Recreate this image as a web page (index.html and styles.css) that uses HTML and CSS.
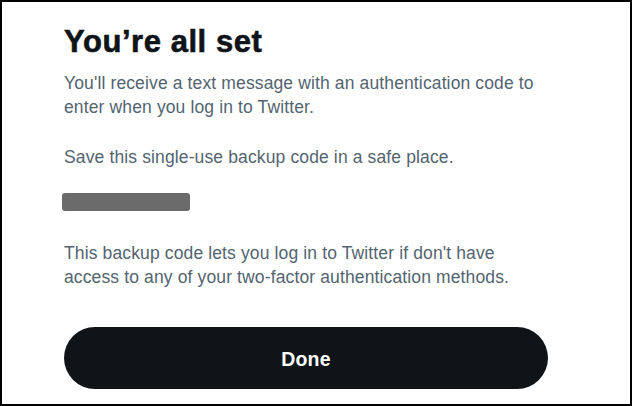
FILE: index.html
```html
<!DOCTYPE html>
<html lang="en">
<head>
<meta charset="utf-8">
<link rel="stylesheet" href="styles.css">
</head>
<body>
<div class="frame">
  <div class="content">
    <h1 class="title">You’re all set</h1>
    <p class="text first">You'll receive a text message with an authentication code to enter when you log in to Twitter.</p>
    <p class="text save">Save this single-use backup code in a safe place.</p>
    <div class="code"></div>
    <p class="text note">This backup code lets you log in to Twitter if don't have access to any of your two-factor authentication methods.</p>
    <button class="done">Done</button>
  </div>
</div>
</body>
</html>
```
FILE: styles.css
```css
html, body {
  margin: 0;
  padding: 0;
  background: #ffffff;
}
.frame {
  box-sizing: border-box;
  width: 632px;
  height: 406px;
  border: 2px solid #000;
  background: #fff;
  padding: 0 0 0 62px;
}
.content {
  width: 486px;
  display: flex;
  flex-direction: column;
  align-items: flex-start;
}
.title {
  margin: 21px 0 0 0;
  font-family: "Liberation Sans", Arial, sans-serif;
  font-weight: 900;
  font-size: 31px;
  line-height: 38px;
  letter-spacing: 0.55px;
  color: #0f1419;
  -webkit-text-stroke: 0.6px #0f1419;
}
.text {
  margin: 0;
  font-family: "Liberation Sans", Arial, sans-serif;
  font-size: 17.5px;
  line-height: 24px;
  letter-spacing: 0.13px;
  color: #536471;
}
.first { margin-top: 10px; }
.save { margin-top: 26px; }
.code {
  margin-top: 24px;
  margin-left: -2px;
  width: 128px;
  height: 18px;
  background: #6b6b6b;
  border-radius: 3px;
}
.note { margin-top: 30px; }
.done {
  margin-top: 38px;
  width: 484px;
  height: 62px;
  padding: 3px 0 0 0;
  border: none;
  border-radius: 31px;
  background: #0f1419;
  color: #fff;
  font-family: "Liberation Sans", Arial, sans-serif;
  font-weight: 700;
  font-size: 19.5px;
  letter-spacing: 0.2px;
  cursor: pointer;
}
```
